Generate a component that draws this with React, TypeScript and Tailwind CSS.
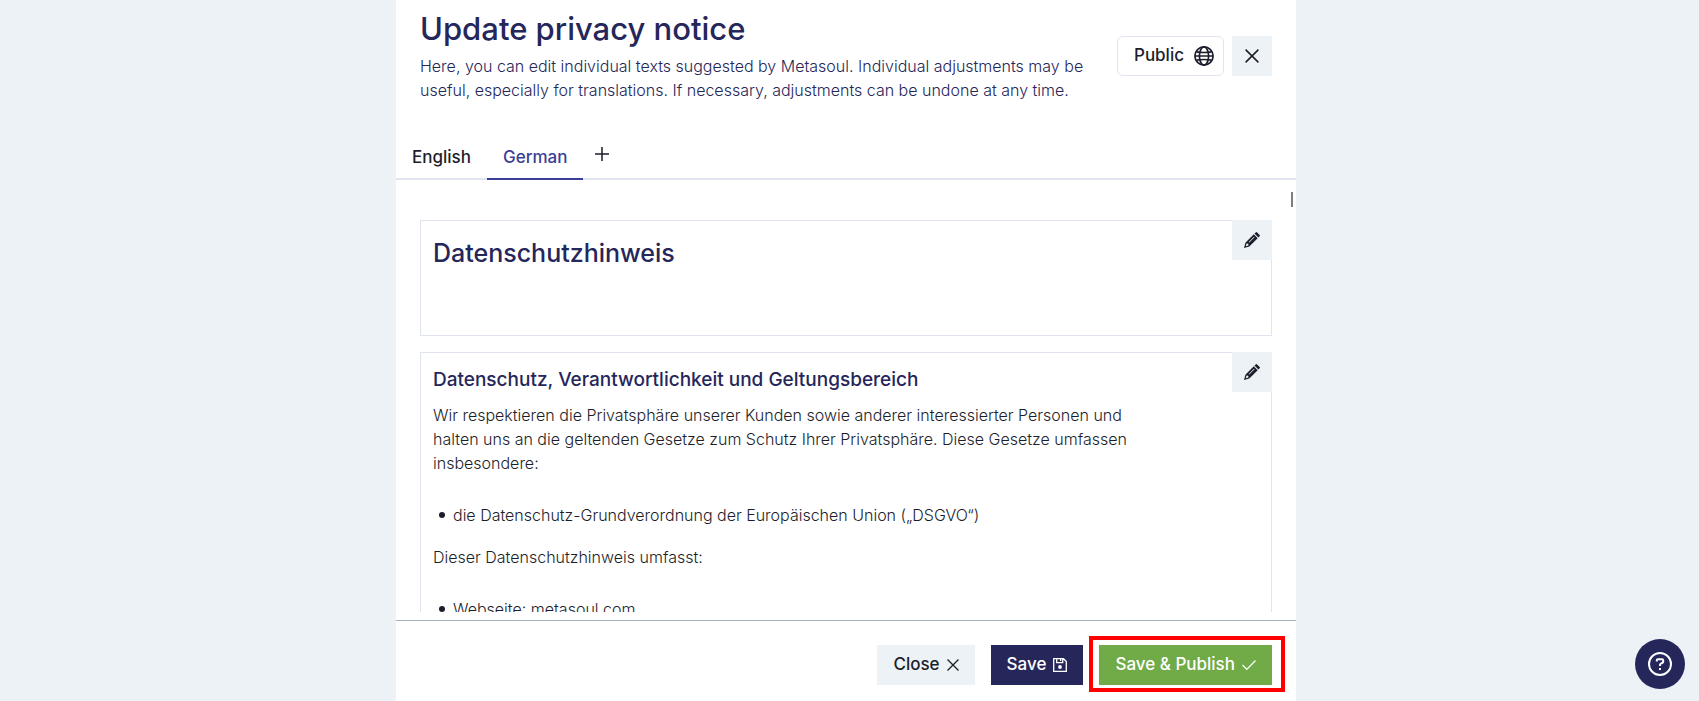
import { useState, type ReactNode } from "react";

function CrossIcon({ className }: { className: string }) {
  return (
    <svg viewBox="0 0 14 14" className={className} fill="none" stroke="currentColor" strokeWidth="1.5" aria-hidden="true">
      <path d="M.6.6l12.8 12.8M13.4.6L.6 13.4" />
    </svg>
  );
}

function PlusIcon() {
  return (
    <svg viewBox="0 0 14 14" className="size-3.5" fill="none" stroke="currentColor" strokeWidth="1.5" aria-hidden="true">
      <path d="M7 0v14M0 7h14" />
    </svg>
  );
}

function GlobeIcon() {
  return (
    <svg viewBox="0 0 20 20" className="size-5" fill="none" stroke="currentColor" strokeWidth="1.7" aria-hidden="true">
      <circle cx="10" cy="10" r="9.1" />
      <ellipse cx="10" cy="10" rx="4.6" ry="9.1" />
      <path d="M1 10h18M2.6 5.8Q10 7.2 17.4 5.8M2.6 14.2Q10 12.8 17.4 14.2" />
    </svg>
  );
}

function PencilIcon() {
  return (
    <svg viewBox="0 0 16 16" className="size-4" fill="currentColor" aria-hidden="true">
      <path d="M13.1.4 15.6 2.9Q16.3 3.6 15.6 4.3L14.4 5.5 10.5 1.6 11.7.4Q12.4-.3 13.1.4Z" />
      <path
        fillRule="evenodd"
        d="M9.8 2.3 13.7 6.2 5.3 14.6 0 16 1.4 10.7ZM2.5 11.5 1.7 14.3 4.5 13.5 4.2 11.8ZM10 4.7 4.7 10 5.2 10.5 10.5 5.2Z"
      />
    </svg>
  );
}

function SaveIcon() {
  return (
    <svg viewBox="0 0 14 14" className="size-3.5" fill="none" stroke="currentColor" strokeWidth="1.3" aria-hidden="true">
      <path d="M.7.7h9.8l2.8 2.8v9.8H.7zM3.7.7v4h6v-4M7.6 1v2" />
      <circle cx="7" cy="9" r="1.9" fill="currentColor" stroke="none" />
    </svg>
  );
}

function CheckIcon() {
  return (
    <svg viewBox="0 0 14 14" className="size-3.5" fill="none" stroke="currentColor" strokeWidth="1.3" aria-hidden="true">
      <path d="M.5 7l4.3 4.4L13.5 2.5" />
    </svg>
  );
}

function HelpIcon() {
  return (
    <svg viewBox="0 0 24 24" className="size-6" fill="none" stroke="currentColor" strokeWidth="2" aria-hidden="true">
      <circle cx="12" cy="12" r="11" />
      <path d="M8.8 9.6V8.4Q8.8 7.2 10 7.2H14Q15.2 7.2 15.2 8.4V9.6Q15.2 10.6 14.2 11L12.8 11.6Q12 12 12 13V14" />
      <path d="M12 16v2" />
    </svg>
  );
}

function Section({ label, children }: { label: string; children: ReactNode }) {
  return (
    <section className="relative border border-[#dfe4f0] px-3 pt-3 pb-8">
      <button
        type="button"
        aria-label={`Edit ${label}`}
        className="absolute -top-px -right-px flex size-10 items-center justify-center bg-[#ecf2f6] text-[#1c1e2c]"
      >
        <PencilIcon />
      </button>
      <div className="pr-24">{children}</div>
    </section>
  );
}

function Bullet({ children }: { children: ReactNode }) {
  return (
    <li className="flex items-center gap-2 pl-1.5">
      <span className="size-1.5 shrink-0 rounded-full bg-[#1c1e2c]" />
      <span>{children}</span>
    </li>
  );
}

const tabs = ["English", "German"];

export default function App() {
  const [active, setActive] = useState("German");
  return (
    <div className="min-h-screen bg-[#ecf2f6] pr-[7px] font-['Inter',sans-serif] text-base text-[#1c1e2c]">
      <main className="mx-auto flex h-screen max-w-[900px] flex-col bg-white">
        <header className="flex items-center gap-3 px-6 pt-[9px]">
          <div className="min-w-0 flex-1 text-[#25265a]">
            <h1 className="mb-[5px] text-[31px] leading-10 font-medium">Update privacy notice</h1>
            <p className="max-w-[690px] font-light">
              Here, you can edit individual texts suggested by Metasoul. Individual adjustments may be useful,
              especially for translations. If necessary, adjustments can be undone at any time.
            </p>
          </div>
          <div className="flex gap-2">
            <button
              type="button"
              className="flex h-10 items-center gap-2.5 rounded-md border border-[#dfe4f0] pr-[9px] pl-4 text-[17px] font-medium"
            >
              Public
              <GlobeIcon />
            </button>
            <button type="button" aria-label="Close dialog" className="flex size-10 items-center justify-center bg-[#ecf2f6]">
              <CrossIcon className="size-3.5" />
            </button>
          </div>
        </header>

        <nav role="tablist" className="mt-8 flex shrink-0 border-b-2 border-[#dfe4ee] text-[17px] leading-6 font-medium">
          {tabs.map((tab) => (
            <button
              key={tab}
              type="button"
              role="tab"
              aria-selected={tab === active}
              onClick={() => setActive(tab)}
              className={
                tab === active
                  ? "-mb-0.5 border-b-2 border-[#3b3f95] px-4 pt-[11px] pb-[9px] text-[#3b3f95]"
                  : "-mb-0.5 border-b-2 border-transparent px-4 pt-[11px] pb-[9px]"
              }
            >
              {tab}
            </button>
          ))}
          <button type="button" aria-label="Add language" className="flex items-center px-3 pb-1">
            <PlusIcon />
          </button>
        </nav>

        <div className="relative mb-2 min-h-0 flex-1 overflow-hidden">
          <div className="flex flex-col gap-4 px-6 pt-10">
            <Section label="Datenschutzhinweis">
              <h2 className="mb-[30px] text-[25px] leading-10 font-medium text-[#25265a]">Datenschutzhinweis</h2>
            </Section>
            <Section label="Datenschutz">
              <h3 className="mb-2 text-[19px] leading-[30px] font-medium text-[#25265a]">
                Datenschutz, Verantwortlichkeit und Geltungsbereich
              </h3>
              <div className="font-light">
                <p className="max-w-[720px]">
                  Wir respektieren die Privatsphäre unserer Kunden sowie anderer interessierter Personen und halten uns
                  an die geltenden Gesetze zum Schutz Ihrer Privatsphäre. Diese Gesetze umfassen insbesondere:
                </p>
                <ul className="mt-7 mb-[18px]">
                  <Bullet>die Datenschutz-Grundverordnung der Europäischen Union („DSGVO“)</Bullet>
                </ul>
                <p>Dieser Datenschutzhinweis umfasst:</p>
                <ul className="mt-7">
                  <Bullet>Webseite: metasoul.com</Bullet>
                </ul>
              </div>
            </Section>
          </div>
          <div className="absolute top-3 right-[3px] h-[15px] w-0.5 bg-[#7b7f80]" />
        </div>

        <footer className="flex justify-end gap-4 border-t border-[#9fb0c3] px-6 pt-6 pb-4 text-[17px] font-medium">
          <button type="button" className="flex h-10 items-center gap-[7px] bg-[#ecf2f6] px-4">
            Close
            <CrossIcon className="size-3" />
          </button>
          <button type="button" className="flex h-10 items-center gap-[7px] bg-[#25265a] px-4 text-white">
            Save
            <SaveIcon />
          </button>
          <button type="button" className="relative flex h-10 items-center gap-[7px] bg-[#70ab47] px-4 text-white">
            Save &amp; Publish
            <CheckIcon />
            <span className="pointer-events-none absolute -top-[9px] -right-[13px] -bottom-[7px] -left-[10px] border-4 border-[#ff0000]" />
          </button>
        </footer>
      </main>

      <button
        type="button"
        aria-label="Help"
        className="fixed right-3.5 bottom-3 flex size-[50px] items-center justify-center rounded-full bg-[#25265a] text-white"
      >
        <HelpIcon />
      </button>
    </div>
  );
}
